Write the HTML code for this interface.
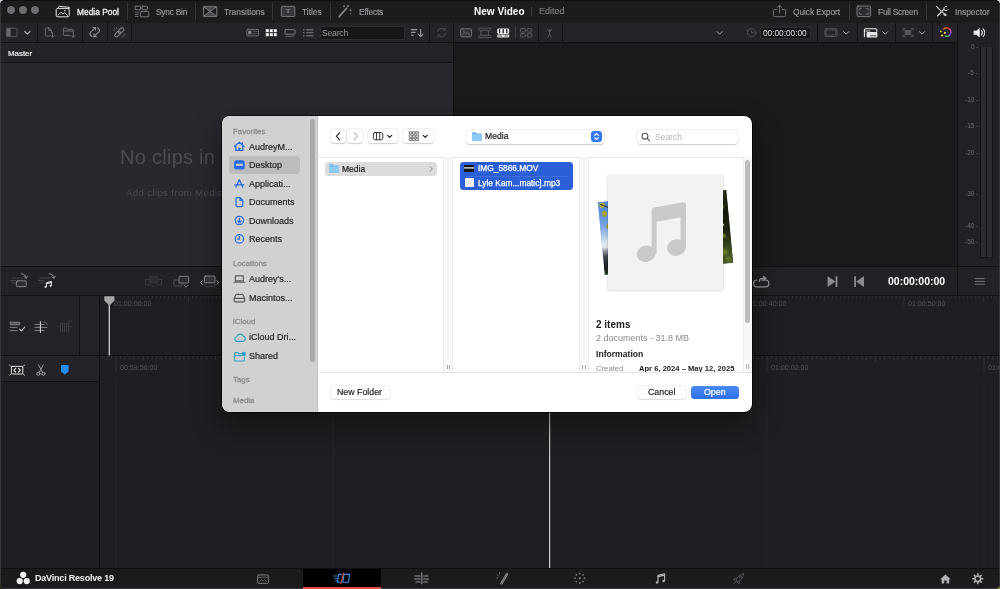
<!DOCTYPE html>
<html>
<head>
<meta charset="utf-8">
<title>DaVinci Resolve</title>
<style>
*{box-sizing:border-box;margin:0;padding:0}
html,body{width:1000px;height:589px;overflow:hidden;background:#23281a;font-family:"Liberation Sans",sans-serif;}
#app{position:absolute;left:0;top:0;width:1000px;height:589px;background:#1f1f23;border-radius:5px;overflow:hidden}
.t{will-change:transform}
.abs{position:absolute}
.t{position:absolute;white-space:nowrap;line-height:1}
/* top bar */
#topbar{left:0;top:0;width:1000px;height:23px;background:#1c1c1f}
.tl{border-radius:50%;background:#6c6c70;box-shadow:0 0 0 0.6px #0c0c0e}
.tb-label{top:7.5px;font-size:8.4px;color:#9c9ca0;-webkit-text-stroke:0.12px #9c9ca0}
.vsep{width:1px;background:#111114}
/* toolbar */
#toolbar{left:0;top:23px;width:957.3px;height:20px;background:#242428;border-bottom:1px solid #131316}
#master{left:0;top:43px;width:453px;height:20px;background:#242428;border-bottom:1px solid #131316}
#pool{left:0;top:63px;width:453px;height:203px;background:#28282e}
#viewer{left:454px;top:43px;width:503.3px;height:223px;background:#1a1a1b}
#meter{left:957.3px;top:23px;width:42.7px;height:244px;background:#212125;border-left:1px solid #131316}
#transport{left:0;top:267px;width:959px;height:28px;background:#222226}
#uptl{left:0;top:296px;width:1000px;height:59px;background:#1f1f23}
#lowtl{left:0;top:356px;width:1000px;height:212px;background:#1f1f23}
#bottombar{left:0;top:567.5px;width:1000px;height:22px;background:#1b1b1e;border-top:1px solid #0e0e10}
.hline{height:1px;background:#111114;left:0;width:1000px}
.ml{right:22px;font-size:6.4px;color:#6e6e73}
.rl{font-size:7.1px;color:#55555a}
/* dialog */
#dlg{left:222px;top:116px;width:530px;height:296px;background:#fff;border-radius:8px;overflow:hidden;box-shadow:0 0 0 0.8px rgba(0,0,0,.8),0 12px 30px rgba(0,0,0,.45)}
#side{left:0;top:0;width:95.5px;height:296px;background:#d1d1d1;border-right:1px solid #c2c2c2}
.sh{font-size:7.9px;color:#8c8c8c;left:11px;-webkit-text-stroke:0.3px #8c8c8c}
.si{font-size:9px;color:#222;left:27px;-webkit-text-stroke:0.18px #222}
.btn{border-radius:3.5px;background:#fff;box-shadow:0 0 0 0.5px rgba(0,0,0,.09),0 0.5px 1.2px rgba(0,0,0,.17)}
</style>
</head>
<body>
<div class="abs" style="left:0;top:0;width:8px;height:8px;background:#c9cdd8"></div>
<div class="abs" style="left:992px;top:0;width:8px;height:8px;background:#d5d7dc"></div>
<div class="abs" style="left:992px;top:581px;width:8px;height:8px;background:#7f8630"></div>
<div id="app">
  <div id="topbar" class="abs"></div>
  <div id="toolbar" class="abs"></div>
  <div id="master" class="abs"></div>
  <div id="pool" class="abs"></div>
  <div class="abs vsep" style="left:453px;top:23px;height:244px"></div>
  <div id="viewer" class="abs"></div>
  <div id="meter" class="abs"></div>
  <div class="abs hline" style="top:266px;width:1000px"></div>
  <div id="transport" class="abs"></div>
  <div class="abs hline" style="top:295px"></div>
  <div id="uptl" class="abs"></div>
  <div class="abs hline" style="top:355px"></div>
  <div id="lowtl" class="abs"></div>
  <div id="bottombar" class="abs"></div>

  <!-- ===== top bar content ===== -->
  <div class="abs tl" style="left:7px;top:5.5px;width:8.4px;height:8.4px"></div>
  <div class="abs tl" style="left:19px;top:5.5px;width:8.4px;height:8.4px"></div>
  <div class="abs tl" style="left:30.9px;top:5.5px;width:8.4px;height:8.4px"></div>
  <div class="t" style="left:77px;top:7.5px;font-size:8.4px;color:#f0f0f0;-webkit-text-stroke:0.3px #f0f0f0">Media Pool</div>
  <div class="t tb-label" style="left:155.5px;letter-spacing:-0.24px">Sync Bin</div>
  <div class="t tb-label" style="left:223.5px">Transitions</div>
  <div class="t tb-label" style="left:301.5px">Titles</div>
  <div class="t tb-label" style="left:359px;letter-spacing:-0.2px">Effects</div>
  <div class="t" style="left:474.4px;top:7.2px;font-size:10px;font-weight:bold;color:#fff;letter-spacing:0.02px">New Video</div>
  <div class="t tb-label" style="left:538.8px;top:7.4px;font-size:9px;color:#737377">Edited</div>
  <div class="t tb-label" style="left:793px;letter-spacing:-0.08px">Quick Export</div>
  <div class="t tb-label" style="left:877.5px;letter-spacing:-0.23px">Full Screen</div>
  <div class="t tb-label" style="left:955px">Inspector</div>
  <div class="abs vsep" style="left:126.5px;top:3px;height:17px;background:#34343a"></div>
  <div class="abs vsep" style="left:194.5px;top:3px;height:17px;background:#34343a"></div>
  <div class="abs vsep" style="left:272px;top:3px;height:17px;background:#34343a"></div>
  <div class="abs vsep" style="left:329.5px;top:3px;height:17px;background:#34343a"></div>
  <div class="abs vsep" style="left:531.4px;top:7px;height:8.5px;background:#3e3e44"></div>
  <div class="abs vsep" style="left:849px;top:3px;height:17px;background:#34343a"></div>
  <div class="abs vsep" style="left:925.5px;top:3px;height:17px;background:#34343a"></div>
  <svg class="abs" style="left:0;top:0" width="1000" height="23" viewBox="0 0 1000 23" fill="none" stroke-linecap="round" stroke-linejoin="round">
    <!-- media pool icon -->
    <g stroke="#e4e4e4" stroke-width="1">
      <path d="M58.4 7.6 L59.2 6.2 L69.4 7.4 L69 9"/>
      <rect x="56.2" y="8.4" width="13" height="8.4" rx="1.2"/>
      <path d="M58 15.2 L61 12.2 L63 14 L64.6 12.8 L67.4 15.2" stroke-width="0.9"/>
      <circle cx="64.8" cy="10.8" r="0.8" fill="#e4e4e4" stroke="none"/>
    </g>
    <!-- sync bin icon -->
    <g stroke="#7d7d82" stroke-width="1">
      <rect x="135.2" y="6.2" width="5.4" height="3.6" rx="0.6"/>
      <rect x="142" y="6.2" width="5.4" height="3.6" rx="0.6"/>
      <rect x="140.4" y="11.6" width="8.4" height="5.2" rx="0.8"/>
      <path d="M135.4 12.4 H138.2 M135.4 14.4 H138.2 M135.4 16.4 H138.2" stroke-width="0.8"/>
    </g>
    <!-- transitions icon -->
    <g stroke="#7d7d82" stroke-width="1">
      <rect x="203.4" y="6.4" width="13.4" height="10" rx="0.8"/>
      <path d="M203.8 6.8 L210.1 11.4 L216.4 6.8 M203.8 16 L210.1 11.4 L216.4 16" fill="#4a4a4f"/>
    </g>
    <!-- titles icon -->
    <g stroke="#7d7d82" stroke-width="1">
      <rect x="281.4" y="6.4" width="13.4" height="10" rx="0.8" fill="#37373b"/>
    </g>
    <!-- effects icon -->
    <g stroke="#8a8a8f" stroke-width="1.3">
      <path d="M339.2 16.6 L346.6 8.2" stroke-width="1.7"/>
      <path d="M348 5.2 V7 M347.1 6.1 H348.9 M350.6 9.6 V11 M349.9 10.3 H351.3 M344 5.6 V6.8 M343.4 6.2 H344.6 M350.8 13.4 V14.2" stroke-width="0.8"/>
    </g>
    <!-- quick export -->
    <g stroke="#6c6c71" stroke-width="1">
      <path d="M777 9.4 H774.4 a1 1 0 0 0 -1 1 V15.6 a1 1 0 0 0 1 1 H784.6 a1 1 0 0 0 1 -1 V10.4 a1 1 0 0 0 -1 -1 H782"/>
      <path d="M779.5 13 V5.4 M777.2 7.4 L779.5 5.2 L781.8 7.4"/>
    </g>
    <!-- full screen -->
    <g stroke="#7d7d82" stroke-width="1">
      <rect x="857" y="6" width="13.6" height="10.6" rx="1.2" fill="#2c2c30"/>
      <path d="M859.4 10 V8.4 H861.4 M866.2 8.4 H868.2 V10 M868.2 12.6 V14.2 H866.2 M861.4 14.2 H859.4 V12.6" stroke-width="0.8"/>
    </g>
    <!-- inspector -->
    <g stroke="#d2d2d2" stroke-width="1.1">
      <path d="M936.6 6.6 L944.4 14.2"/>
      <path d="M937.6 15.8 L943.8 9.4" stroke-width="1.3"/>
      <path d="M946.6 6.4 a2.2 2.2 0 1 0 1.4 3.2" stroke-width="1"/>
      <ellipse cx="945" cy="14.7" rx="1.7" ry="1.2" fill="#d2d2d2" stroke="none" transform="rotate(20 945 14.7)"/>
    </g>
  </svg>
  <div class="t" style="left:286.4px;top:8.2px;font-size:6.5px;font-family:'Liberation Serif',serif;font-weight:bold;color:#8a8a8f">T</div>
  <!-- ===== toolbar row ===== -->
  <div class="abs vsep" style="left:36.5px;top:23px;height:19px"></div>
  <div class="abs vsep" style="left:82px;top:23px;height:19px"></div>
  <div class="abs vsep" style="left:106.8px;top:23px;height:19px"></div>
  <div class="abs vsep" style="left:131px;top:23px;height:19px"></div>
  <div class="abs vsep" style="left:428.5px;top:23px;height:19px"></div>
  <div class="abs vsep" style="left:514.6px;top:26px;height:13px;background:#3a3a40"></div>
  <div class="abs vsep" style="left:537.8px;top:23px;height:19px"></div>
  <div class="abs vsep" style="left:562px;top:23px;height:19px"></div>
  <div class="abs vsep" style="left:816.5px;top:23px;height:19px"></div>
  <div class="abs vsep" style="left:857px;top:23px;height:19px"></div>
  <div class="abs vsep" style="left:894.7px;top:23px;height:19px"></div>
  <div class="abs vsep" style="left:931.5px;top:23px;height:19px"></div>
  <div class="abs" style="left:320px;top:26px;width:85px;height:13.5px;border-radius:2px;background:#161618;border:1px solid #2c2c31"></div>
  <div class="t" style="left:322px;top:28.6px;font-size:8.6px;color:#9c9ca0;letter-spacing:-0.2px">Search</div>
  <div class="abs" style="left:760px;top:26.5px;width:50.5px;height:12.5px;border-radius:2px;background:#151517;border:1px solid #2e2e33"></div>
  <div class="t" style="left:763px;top:28.9px;font-size:8.4px;color:#dedede;letter-spacing:-0.05px">00:00:00:00</div>
  <div class="t" style="left:7.7px;top:49.6px;font-size:7.9px;color:#ececec;-webkit-text-stroke:0.2px #ececec">Master</div>
  <svg class="abs" style="left:0;top:23px" width="1000" height="20" viewBox="0 23 1000 20" fill="none" stroke-linecap="round" stroke-linejoin="round">
    <!-- sidebar toggle -->
    <rect x="6.6" y="28.2" width="10.4" height="8.4" rx="1" stroke="#5e5e63" stroke-width="0.9"/>
    <rect x="6.8" y="28.4" width="3.8" height="8" fill="#6a6a6f"/>
    <path d="M24.6 31.4 L27.3 34.2 L30 31.4" stroke="#b4b4b8" stroke-width="1.1"/>
    <!-- import file -->
    <g stroke="#6e6e73" stroke-width="1">
      <path d="M51.4 33 V30.2 L49 27.8 H46.2 a0.8 0.8 0 0 0 -0.8 0.8 V35.2 a0.8 0.8 0 0 0 0.8 0.8 H49.4 M48.8 28 V30.4 H51.2"/>
      <path d="M52.6 32.6 V37 M50.8 35.4 L52.6 37.2 L54.4 35.4"/>
    </g>
    <!-- import folder -->
    <g stroke="#6e6e73" stroke-width="1">
      <path d="M70 35.4 H64.2 a0.8 0.8 0 0 1 -0.8 -0.8 V28.8 a0.8 0.8 0 0 1 0.8 -0.8 H66.6 L67.8 29.4 H72.4 a0.8 0.8 0 0 1 0.8 0.8 V32.4 M63.6 31 H73"/>
      <path d="M73.2 33 V37.2 M71.4 35.6 L73.2 37.4 L75 35.6"/>
    </g>
    <!-- sync -->
    <g stroke="#8c8c91" stroke-width="1.1" transform="rotate(-42 94.7 32.1)">
      <path d="M89.6 33.4 V31.8 a2.4 2.4 0 0 1 2.4 -2.4 H98"/>
      <path d="M96.4 27.6 L98.4 29.4 L96.4 31.2" />
      <path d="M99.8 30.8 V32.4 a2.4 2.4 0 0 1 -2.4 2.4 H91.4"/>
      <path d="M93 33 L91 34.8 L93 36.6"/>
    </g>
    <!-- link -->
    <g stroke="#808085" stroke-width="1.05" transform="rotate(-45 119.3 32.3)">
      <rect x="113.6" y="30.5" width="6.6" height="3.6" rx="1.8"/>
      <rect x="118.4" y="30.5" width="6.6" height="3.6" rx="1.8"/>
    </g>
    <g stroke="#68686d" stroke-width="0.7">
      <path d="M114.4 28.2 L115.2 29.4 M113.2 30 L114.4 30.6 M116.4 27.4 L116.6 28.6"/>
      <path d="M124.2 36.4 L123.4 35.2 M125.4 34.6 L124.2 34 M122.2 37.2 L122 36"/>
    </g>
    <!-- view mode icons -->
    <g stroke="#75757a" stroke-width="0.9">
      <rect x="246.8" y="29.4" width="11.8" height="6.4" rx="0.8"/>
      <rect x="248.2" y="30.8" width="3.2" height="3.4" fill="#8a8a8f" stroke="none"/>
      <path d="M253 31.4 H257 M253 33.4 H257" stroke-width="0.6"/>
    </g>
    <g fill="#f4f4f4">
      <rect x="265.8" y="29.2" width="3" height="3"/><rect x="269.8" y="29.2" width="3" height="3"/><rect x="273.8" y="29.2" width="3" height="3"/>
      <rect x="265.8" y="33.2" width="3" height="3"/><rect x="269.8" y="33.2" width="3" height="3"/><rect x="273.8" y="33.2" width="3" height="3"/>
    </g>
    <g stroke="#7c7c81" stroke-width="1">
      <rect x="285" y="29.6" width="10" height="4.6" rx="0.6"/>
      <path d="M286.4 36.2 H293.6" stroke-width="0.8"/>
    </g>
    <g stroke="#85858a" stroke-width="1">
      <path d="M306.6 29.8 H313 M306.6 32.8 H313 M306.6 35.8 H313"/>
      <path d="M303.4 29.8 H304.2 M303.4 32.8 H304.2 M303.4 35.8 H304.2"/>
    </g>
    <!-- sort -->
    <g stroke="#9a9a9f" stroke-width="1.1">
      <path d="M411.4 29.6 H416.8 M411.4 32.4 H415 M411.4 35.2 H413.4"/>
      <path d="M420.6 29.2 V36.4 M418.2 34.2 L420.6 36.6 L423 34.2"/>
    </g>
    <!-- refresh dim -->
    <g stroke="#4e4e53" stroke-width="1">
      <path d="M437.6 31.6 a4.2 4.2 0 0 1 7.4 -1.6 M445.2 28.2 V30.2 H443.2"/>
      <path d="M445.6 33.6 a4.2 4.2 0 0 1 -7.4 1.6 M438 37 V35 H440"/>
    </g>
    <!-- viewer mode icons -->
    <g stroke="#6f6f74" stroke-width="1">
      <rect x="460.6" y="28.8" width="11" height="8" rx="1.2" fill="#333337"/>
      <path d="M462.4 35 L464.6 32.4 L466 33.8 L467.4 32.6 L469.6 35" stroke-width="0.8"/>
      <circle cx="464" cy="31" r="0.7" fill="#6f6f74" stroke="none"/>
    </g>
    <g stroke="#66666b" stroke-width="0.8">
      <path d="M478.4 28.2 H491 M478.4 37.6 H491" stroke-dasharray="1 1"/>
      <rect x="481" y="30.4" width="7.4" height="5" rx="0.6"/>
      <path d="M478.6 29.8 L480.8 31 M478.6 36.2 L480.8 35 M490.8 29.8 L488.6 31 M490.8 36.2 L488.6 35"/>
    </g>
    <g>
      <rect x="497.2" y="28.4" width="12" height="5.6" rx="1.4" fill="#f0f0f0"/>
      <rect x="497.2" y="34.6" width="12" height="2.8" rx="1" fill="#e0e0e0"/>
      <path d="M499.6 29.6 V32.8 M503.2 29.6 V32.8 M506.8 29.6 V32.8" stroke="#1c1c1f" stroke-width="1.3"/>
      <path d="M499 36 H501.4 M505 36 H507.4" stroke="#1c1c1f" stroke-width="0.7"/>
    </g>
    <g stroke="#5c5c61" stroke-width="1">
      <rect x="520.6" y="28.6" width="4.8" height="3.4" rx="0.8"/><rect x="527" y="28.6" width="4.8" height="3.4" rx="0.8"/>
      <rect x="520.6" y="33.6" width="4.8" height="3.4" rx="0.8"/><rect x="527" y="33.6" width="4.8" height="3.4" rx="0.8"/>
    </g>
    <g stroke="#5c5c61" stroke-width="0.9">
      <circle cx="549.6" cy="30.8" r="1" fill="#5c5c61"/>
      <path d="M549.6 32.2 V34.4 M549.6 34.4 L547.8 37.2 M549.6 34.4 L551.4 37.2 M547.4 29.2 L548.4 30.2 M551.8 29.2 L550.8 30.2"/>
    </g>
    <!-- chevron in viewer title -->
    <path d="M717 31.6 L719.6 34.2 L722.2 31.6" stroke="#a0a0a5" stroke-width="1"/>
    <!-- clock -->
    <g stroke="#505055" stroke-width="0.9">
      <circle cx="751.6" cy="32.6" r="4.2"/>
      <path d="M751.6 30.2 V32.8 H754 M746.4 30 L748.2 31.2" />
    </g>
    <!-- bounding -->
    <g stroke="#59595e" stroke-width="1">
      <rect x="825" y="28.8" width="12" height="7.6" rx="1"/>
      <path d="M826.4 30.4 Q831 29.4 835.6 30.4 V34.8 Q831 35.8 826.4 34.8 Z" stroke-width="0.7"/>
    </g>
    <path d="M843.6 31.6 L846.2 34.2 L848.8 31.6" stroke="#a0a0a5" stroke-width="1"/>
    <!-- timeline res icon (white) -->
    <g>
      <path d="M864.4 36.6 V29.8 a1 1 0 0 1 1 -1 H875.8 a1 1 0 0 1 1 1 V31.4" stroke="#e8e8e8" stroke-width="1.1"/>
      <rect x="866.6" y="32" width="10.8" height="5.4" rx="1" fill="#e8e8e8"/>
      <path d="M864.6 31 H870" stroke="#e8e8e8" stroke-width="0.8"/>
      <path d="M870.6 35.8 H873 M874 35.8 H875.8" stroke="#1c1c1f" stroke-width="0.8"/>
    </g>
    <path d="M882.6 31.6 L885.2 34.2 L887.8 31.6" stroke="#a0a0a5" stroke-width="1"/>
    <!-- dim scope icon -->
    <g stroke="#58585d" stroke-width="0.9">
      <path d="M903 30.4 V28.6 H905 M911.2 28.6 H913.2 V30.4 M913.2 34.8 V36.6 H911.2 M905 36.6 H903 V34.8"/>
      <rect x="905.6" y="30.6" width="5" height="4" fill="#58585d"/>
      <path d="M904 29.6 L905.6 30.8 M912.2 29.6 L910.6 30.8 M904 35.6 L905.6 34.4 M912.2 35.6 L910.6 34.4"/>
    </g>
    <path d="M919.4 31.6 L922 34.2 L924.6 31.6" stroke="#a0a0a5" stroke-width="1"/>
    <!-- color wheel icon -->
    <g stroke-width="1.2" fill="none">
      <path d="M943.6 29.2 A4.2 4.2 0 0 1 946.8 27.9" stroke="#e8792e"/>
      <path d="M946.8 27.9 A4.2 4.2 0 0 1 950 29.4" stroke="#e8453c"/>
      <path d="M950 29.4 A4.2 4.2 0 0 1 950.9 33" stroke="#e545c8"/>
      <path d="M950.9 33 A4.2 4.2 0 0 1 948.6 35.9" stroke="#7a4fe8"/>
      <path d="M948.6 35.9 A4.2 4.2 0 0 1 945.4 36.1" stroke="#35c46a"/>
      <circle cx="940.8" cy="31.3" r="0.9" fill="#f3e23e" stroke="none"/>
      <circle cx="944.9" cy="32.8" r="1.1" fill="#f3e23e" stroke="none"/>
      <circle cx="942.2" cy="35.5" r="1.1" fill="#f3e23e" stroke="none"/>
    </g>
    <!-- speaker -->
    <g fill="#f0f0f0" stroke="#f0f0f0">
      <path d="M974.2 31 H976.4 L979.4 28.4 V37 L976.4 34.4 H974.2 Z" stroke-width="0.6"/>
      <path d="M981.4 30.6 a3 3 0 0 1 0 4.2 M983.2 29 a5.4 5.4 0 0 1 0 7.4" fill="none" stroke-width="1.1"/>
    </g>
  </svg>
  <!-- ===== media pool empty text ===== -->
  <div class="t" style="left:119.9px;top:146.6px;font-size:20px;color:#4b4d54;letter-spacing:0.27px">No clips in media pool</div>
  <div class="t" style="left:126.3px;top:188.2px;font-size:9.7px;color:#494b51;letter-spacing:0.33px">Add clips from Media Storage to get started</div>

  <!-- ===== audio meter ===== -->
  <div class="abs" style="left:980px;top:46.6px;width:13px;height:211.2px;background:#151517"></div>
  <div class="abs" style="left:980.8px;top:47.4px;width:5.4px;height:209.6px;background:#2b2b30"></div>
  <div class="abs" style="left:986.9px;top:47.4px;width:5.4px;height:209.6px;background:#2b2b30"></div>
  <div class="t ml" style="top:44px">0 -</div>
  <div class="t ml" style="top:70.4px">-5 -</div>
  <div class="t ml" style="top:96.9px">-10 -</div>
  <div class="t ml" style="top:123px">-15 -</div>
  <div class="t ml" style="top:149.5px">-20 -</div>
  <div class="t ml" style="top:191px">-30 -</div>
  <div class="t ml" style="top:223px">-40 -</div>
  <div class="t ml" style="top:238.6px">-50 -</div>

  <!-- ===== transport ===== -->
  <div class="abs" style="left:957.3px;top:267px;width:42.7px;height:28px;background:#222226;border-left:1px solid #131316"></div>
  <div class="t" style="left:888px;top:276.2px;font-size:10.5px;font-weight:bold;color:#fff">00:00:00:00</div>
  <svg class="abs" style="left:0;top:267px" width="1000" height="29" viewBox="0 267 1000 29" fill="none" stroke-linecap="round" stroke-linejoin="round">
    <g stroke="#4a4a4f" stroke-width="0.9">
      <path d="M12 278 H23 M10.6 280.5 H15.6 M12 283 H15.4"/>
      <rect x="16.4" y="280.9" width="9.8" height="5.8" rx="1" stroke="#8a8a8f" stroke-width="1" fill="#2a2a2e"/>
      <path d="M21.4 273.8 Q25.4 273.8 26 277.6 M24.2 276.6 L26.1 278.6 L27.4 276.2" stroke="#8a8a8f" stroke-width="1"/>
    </g>
    <g stroke="#4a4a4f" stroke-width="0.9">
      <path d="M39.8 278 H50.8 M38.4 280.5 H44.4 M39.8 283 H43.4"/>
      <path d="M49.2 273.8 Q53.2 273.8 53.8 277.6 M52 276.6 L53.9 278.6 L55.2 276.2" stroke="#8a8a8f" stroke-width="1"/>
      <path d="M46.4 286.6 V282.6 L51.4 281.4 V285.6" stroke="#e0e0e0" stroke-width="1"/>
      <path d="M46.4 283.6 L51.4 282.4" stroke="#e0e0e0" stroke-width="1.2"/>
      <circle cx="45.6" cy="286.8" r="1.1" fill="#e0e0e0" stroke="none"/><circle cx="50.6" cy="285.8" r="1.1" fill="#e0e0e0" stroke="none"/>
    </g>
    <g stroke="#3e3e43" stroke-width="0.9">
      <rect x="145.6" y="279.4" width="4.6" height="5.6" rx="0.6"/><rect x="157" y="279.4" width="4.6" height="5.6" rx="0.6"/>
      <rect x="149.8" y="276.4" width="7.6" height="6" rx="0.8" fill="#2b2b30"/>
      <path d="M151.8 285.4 L153.6 287.2 L155.4 285.4"/>
    </g>
    <g stroke="#5a5a5f" stroke-width="0.9">
      <rect x="173.8" y="280" width="8" height="6" rx="0.8"/>
      <rect x="179" y="276.4" width="9.6" height="6.6" rx="0.8" stroke="#85858a" fill="#2b2b30"/>
      <path d="M184.4 285.4 L186.2 287.2 L188 285.4" stroke="#85858a"/>
    </g>
    <g stroke="#77777c" stroke-width="0.9">
      <rect x="204.2" y="282.4" width="11" height="4.2" rx="0.8" stroke="#4c4c51"/>
      <rect x="204.4" y="276" width="10.6" height="6.8" rx="1" fill="#3a3a3e" stroke="#8a8a8f" stroke-width="1"/>
      <path d="M202.4 280.6 L200.4 282.5 L202.4 284.4 M216.8 280.6 L218.8 282.5 L216.8 284.4" stroke="#a0a0a5" stroke-width="1"/>
    </g>
    <!-- loop -->
    <g stroke="#9a9a9f" stroke-width="1.2">
      <path d="M757 280 a3.4 3.4 0 0 0 0 6.8 H765.4 a3.4 3.4 0 0 0 0 -6.8 H761.4"/>
      <path d="M763.4 276.4 L766 278.4 L763.4 280.4 M766 278.4 H762.4 a3 3 0 0 0 -3 3"/>
    </g>
    <!-- next / prev -->
    <g fill="#8c8c90" stroke="none">
      <path d="M827.6 276.2 L835.4 281.6 L827.6 287 Z"/><rect x="835.6" y="276.2" width="1.8" height="10.8"/>
      <path d="M864 276.2 L856.2 281.6 L864 287 Z"/><rect x="854.2" y="276.2" width="1.8" height="10.8"/>
    </g>
    <path d="M975.4 278.6 H984.4 M975.4 281.4 H984.4 M975.4 284.2 H984.4" stroke="#7e7e83" stroke-width="0.9"/>
  </svg>

  <!-- ===== upper timeline ===== -->
  <div class="abs" style="left:0;top:296px;width:79px;height:59px;background:#232327"></div>
  <div class="abs vsep" style="left:79px;top:296px;height:59px"></div>
  <div class="abs" style="left:80px;top:296px;width:19px;height:59px;background:#232327"></div>
  <div class="abs vsep" style="left:99px;top:296px;height:272px"></div>
  <div class="t rl" style="left:113.5px;top:300.6px">01:00:00:00</div>
  <div class="t rl" style="left:272.5px;top:300.6px">01:00:10:00</div>
  <div class="t rl" style="left:749.3px;top:300.6px">01:00:40:00</div>
  <div class="t rl" style="left:908px;top:300.6px">01:00:50:00</div>
  <svg class="abs" style="left:0;top:296px" width="1000" height="62" viewBox="0 296 1000 62" fill="none">
    <path d="M101.0 296 v2.6 M105.0 296 v2.6 M109.0 296 v10 M113.0 296 v2.6 M117.0 296 v2.6 M120.9 296 v2.6 M124.9 296 v2.6 M128.9 296 v2.6 M132.8 296 v2.6 M136.8 296 v2.6 M140.8 296 v2.6 M144.8 296 v2.6 M148.8 296 v2.6 M152.7 296 v2.6 M156.7 296 v2.6 M160.7 296 v2.6 M164.7 296 v2.6 M168.6 296 v2.6 M172.6 296 v2.6 M176.6 296 v2.6 M180.6 296 v2.6 M184.5 296 v2.6 M188.5 296 v5 M192.5 296 v2.6 M196.4 296 v2.6 M200.4 296 v2.6 M204.4 296 v2.6 M208.4 296 v2.6 M212.4 296 v2.6 M216.3 296 v2.6 M220.3 296 v2.6 M224.3 296 v2.6 M228.2 296 v2.6 M232.2 296 v2.6 M236.2 296 v2.6 M240.2 296 v2.6 M244.2 296 v2.6 M248.1 296 v2.6 M252.1 296 v2.6 M256.1 296 v2.6 M260.1 296 v2.6 M264.0 296 v2.6 M268.0 296 v10 M272.0 296 v2.6 M276.0 296 v2.6 M279.9 296 v2.6 M283.9 296 v2.6 M287.9 296 v2.6 M291.9 296 v2.6 M295.8 296 v2.6 M299.8 296 v2.6 M303.8 296 v2.6 M307.8 296 v2.6 M311.7 296 v2.6 M315.7 296 v2.6 M319.7 296 v2.6 M323.6 296 v2.6 M327.6 296 v2.6 M331.6 296 v2.6 M335.6 296 v2.6 M339.6 296 v2.6 M343.5 296 v2.6 M347.5 296 v5 M351.5 296 v2.6 M355.5 296 v2.6 M359.4 296 v2.6 M363.4 296 v2.6 M367.4 296 v2.6 M371.4 296 v2.6 M375.3 296 v2.6 M379.3 296 v2.6 M383.3 296 v2.6 M387.2 296 v2.6 M391.2 296 v2.6 M395.2 296 v2.6 M399.2 296 v2.6 M403.2 296 v2.6 M407.1 296 v2.6 M411.1 296 v2.6 M415.1 296 v2.6 M419.1 296 v2.6 M423.0 296 v2.6 M427.0 296 v10 M431.0 296 v2.6 M434.9 296 v2.6 M438.9 296 v2.6 M442.9 296 v2.6 M446.9 296 v2.6 M450.9 296 v2.6 M454.8 296 v2.6 M458.8 296 v2.6 M462.8 296 v2.6 M466.8 296 v2.6 M470.7 296 v2.6 M474.7 296 v2.6 M478.7 296 v2.6 M482.7 296 v2.6 M486.6 296 v2.6 M490.6 296 v2.6 M494.6 296 v2.6 M498.6 296 v2.6 M502.5 296 v2.6 M506.5 296 v5 M510.5 296 v2.6 M514.5 296 v2.6 M518.4 296 v2.6 M522.4 296 v2.6 M526.4 296 v2.6 M530.4 296 v2.6 M534.3 296 v2.6 M538.3 296 v2.6 M542.3 296 v2.6 M546.2 296 v2.6 M550.2 296 v2.6 M554.2 296 v2.6 M558.2 296 v2.6 M562.2 296 v2.6 M566.1 296 v2.6 M570.1 296 v2.6 M574.1 296 v2.6 M578.0 296 v2.6 M582.0 296 v2.6 M586.0 296 v10 M590.0 296 v2.6 M594.0 296 v2.6 M597.9 296 v2.6 M601.9 296 v2.6 M605.9 296 v2.6 M609.9 296 v2.6 M613.8 296 v2.6 M617.8 296 v2.6 M621.8 296 v2.6 M625.8 296 v2.6 M629.7 296 v2.6 M633.7 296 v2.6 M637.7 296 v2.6 M641.6 296 v2.6 M645.6 296 v2.6 M649.6 296 v2.6 M653.6 296 v2.6 M657.6 296 v2.6 M661.5 296 v2.6 M665.5 296 v5 M669.5 296 v2.6 M673.5 296 v2.6 M677.4 296 v2.6 M681.4 296 v2.6 M685.4 296 v2.6 M689.4 296 v2.6 M693.3 296 v2.6 M697.3 296 v2.6 M701.3 296 v2.6 M705.2 296 v2.6 M709.2 296 v2.6 M713.2 296 v2.6 M717.2 296 v2.6 M721.1 296 v2.6 M725.1 296 v2.6 M729.1 296 v2.6 M733.1 296 v2.6 M737.1 296 v2.6 M741.0 296 v2.6 M745.0 296 v10 M749.0 296 v2.6 M753.0 296 v2.6 M756.9 296 v2.6 M760.9 296 v2.6 M764.9 296 v2.6 M768.9 296 v2.6 M772.8 296 v2.6 M776.8 296 v2.6 M780.8 296 v2.6 M784.8 296 v2.6 M788.7 296 v2.6 M792.7 296 v2.6 M796.7 296 v2.6 M800.6 296 v2.6 M804.6 296 v2.6 M808.6 296 v2.6 M812.6 296 v2.6 M816.6 296 v2.6 M820.5 296 v2.6 M824.5 296 v5 M828.5 296 v2.6 M832.5 296 v2.6 M836.4 296 v2.6 M840.4 296 v2.6 M844.4 296 v2.6 M848.4 296 v2.6 M852.3 296 v2.6 M856.3 296 v2.6 M860.3 296 v2.6 M864.2 296 v2.6 M868.2 296 v2.6 M872.2 296 v2.6 M876.2 296 v2.6 M880.1 296 v2.6 M884.1 296 v2.6 M888.1 296 v2.6 M892.1 296 v2.6 M896.1 296 v2.6 M900.0 296 v2.6 M904.0 296 v10 M908.0 296 v2.6 M912.0 296 v2.6 M915.9 296 v2.6 M919.9 296 v2.6 M923.9 296 v2.6 M927.9 296 v2.6 M931.8 296 v2.6 M935.8 296 v2.6 M939.8 296 v2.6 M943.8 296 v2.6 M947.7 296 v2.6 M951.7 296 v2.6 M955.7 296 v2.6 M959.6 296 v2.6 M963.6 296 v2.6 M967.6 296 v2.6 M971.6 296 v2.6 M975.6 296 v2.6 M979.5 296 v2.6 M983.5 296 v5 M987.5 296 v2.6 M991.5 296 v2.6 M995.4 296 v2.6 M999.4 296 v2.6" stroke="#38383d" stroke-width="0.7"/>
    <path d="M109.3 300 V355.4" stroke="#cfcfcf" stroke-width="1.3"/>
    <path d="M104.6 296.6 H114.2 V300.6 L109.4 305.2 L104.6 300.6 Z" fill="#a6a6a6" stroke="#b8b8b8" stroke-width="0.5"/>
    <!-- left icons -->
    <g stroke="#8a8a8f" stroke-width="0.9" stroke-linecap="round" stroke-linejoin="round">
      <rect x="10.2" y="322.2" width="9.6" height="2.6" rx="0.6" fill="#55555a"/>
      <path d="M10.2 327.4 H17 M10.2 330.6 H17"/>
      <path d="M19.6 329 L21.4 331 L24.8 327" stroke="#d0d0d0" stroke-width="1.1"/>
    </g>
    <g stroke="#8a8a8f" stroke-width="0.9" stroke-linecap="round">
      <path d="M35 324.4 H44 M35 327.4 H47 M35 330.4 H44" />
      <path d="M40.4 321.6 V332.4" stroke="#d0d0d0" stroke-width="1.1"/>
      <path d="M43.6 322 a4 4 0 0 1 4 3" stroke-width="0.7" stroke-dasharray="1 1"/>
    </g>
    <g stroke="#46464b" stroke-width="0.8" stroke-linecap="round">
      <path d="M57.6 326.6 H59.6 M70 326.6 H72 M60.6 323.4 V331.4 M62.6 322.6 V332 M64.6 323.4 V331.4 M66.6 322.6 V332 M68.6 323.4 V331.4"/>
      <path d="M68.8 320.8 L70.2 322.2 L71.6 320.8"/>
    </g>
  </svg>

  <!-- ===== lower timeline ===== -->
  <div class="abs" style="left:0;top:356px;width:99px;height:25px;background:#232327"></div>
  <div class="abs hline" style="top:381px;width:99px"></div>
  <div class="t rl" style="left:120.4px;top:364.8px">00:59:56:00</div>
  <div class="t rl" style="left:337.4px;top:364.8px">00:59:58:00</div>
  <div class="t rl" style="left:554.4px;top:364.8px">01:00:00:00</div>
  <div class="t rl" style="left:771.4px;top:364.8px">01:00:02:00</div>
  <div class="t rl" style="left:988.2px;top:364.8px">01:00:04:00</div>
  <svg class="abs" style="left:0;top:356px" width="1000" height="212" viewBox="0 356 1000 212" fill="none">
    <path d="M102.4 356 v3 M107.0 356 v4.2 M111.5 356 v3 M116.0 356 v16.5 M120.5 356 v3 M125.0 356 v4.2 M129.6 356 v3 M134.1 356 v4.2 M138.6 356 v3 M143.1 356 v4.2 M147.6 356 v3 M152.2 356 v4.2 M156.7 356 v3 M161.2 356 v4.2 M165.7 356 v3 M170.2 356 v4.2 M174.8 356 v3 M179.3 356 v4.2 M183.8 356 v3 M188.3 356 v4.2 M192.9 356 v3 M197.4 356 v4.2 M201.9 356 v3 M206.4 356 v4.2 M210.9 356 v3 M215.5 356 v4.2 M220.0 356 v3 M224.5 356 v6 M229.0 356 v3 M233.5 356 v4.2 M238.1 356 v3 M242.6 356 v4.2 M247.1 356 v3 M251.6 356 v4.2 M256.1 356 v3 M260.7 356 v4.2 M265.2 356 v3 M269.7 356 v4.2 M274.2 356 v3 M278.8 356 v4.2 M283.3 356 v3 M287.8 356 v4.2 M292.3 356 v3 M296.8 356 v4.2 M301.4 356 v3 M305.9 356 v4.2 M310.4 356 v3 M314.9 356 v4.2 M319.4 356 v3 M324.0 356 v4.2 M328.5 356 v3 M333.0 356 v16.5 M337.5 356 v3 M342.0 356 v4.2 M346.6 356 v3 M351.1 356 v4.2 M355.6 356 v3 M360.1 356 v4.2 M364.6 356 v3 M369.2 356 v4.2 M373.7 356 v3 M378.2 356 v4.2 M382.7 356 v3 M387.2 356 v4.2 M391.8 356 v3 M396.3 356 v4.2 M400.8 356 v3 M405.3 356 v4.2 M409.9 356 v3 M414.4 356 v4.2 M418.9 356 v3 M423.4 356 v4.2 M427.9 356 v3 M432.5 356 v4.2 M437.0 356 v3 M441.5 356 v6 M446.0 356 v3 M450.5 356 v4.2 M455.1 356 v3 M459.6 356 v4.2 M464.1 356 v3 M468.6 356 v4.2 M473.1 356 v3 M477.7 356 v4.2 M482.2 356 v3 M486.7 356 v4.2 M491.2 356 v3 M495.8 356 v4.2 M500.3 356 v3 M504.8 356 v4.2 M509.3 356 v3 M513.8 356 v4.2 M518.4 356 v3 M522.9 356 v4.2 M527.4 356 v3 M531.9 356 v4.2 M536.4 356 v3 M541.0 356 v4.2 M545.5 356 v3 M550.0 356 v16.5 M554.5 356 v3 M559.0 356 v4.2 M563.6 356 v3 M568.1 356 v4.2 M572.6 356 v3 M577.1 356 v4.2 M581.6 356 v3 M586.2 356 v4.2 M590.7 356 v3 M595.2 356 v4.2 M599.7 356 v3 M604.2 356 v4.2 M608.8 356 v3 M613.3 356 v4.2 M617.8 356 v3 M622.3 356 v4.2 M626.9 356 v3 M631.4 356 v4.2 M635.9 356 v3 M640.4 356 v4.2 M644.9 356 v3 M649.5 356 v4.2 M654.0 356 v3 M658.5 356 v6 M663.0 356 v3 M667.5 356 v4.2 M672.1 356 v3 M676.6 356 v4.2 M681.1 356 v3 M685.6 356 v4.2 M690.1 356 v3 M694.7 356 v4.2 M699.2 356 v3 M703.7 356 v4.2 M708.2 356 v3 M712.8 356 v4.2 M717.3 356 v3 M721.8 356 v4.2 M726.3 356 v3 M730.8 356 v4.2 M735.4 356 v3 M739.9 356 v4.2 M744.4 356 v3 M748.9 356 v4.2 M753.4 356 v3 M758.0 356 v4.2 M762.5 356 v3 M767.0 356 v16.5 M771.5 356 v3 M776.0 356 v4.2 M780.6 356 v3 M785.1 356 v4.2 M789.6 356 v3 M794.1 356 v4.2 M798.6 356 v3 M803.2 356 v4.2 M807.7 356 v3 M812.2 356 v4.2 M816.7 356 v3 M821.2 356 v4.2 M825.8 356 v3 M830.3 356 v4.2 M834.8 356 v3 M839.3 356 v4.2 M843.9 356 v3 M848.4 356 v4.2 M852.9 356 v3 M857.4 356 v4.2 M861.9 356 v3 M866.5 356 v4.2 M871.0 356 v3 M875.5 356 v6 M880.0 356 v3 M884.5 356 v4.2 M889.1 356 v3 M893.6 356 v4.2 M898.1 356 v3 M902.6 356 v4.2 M907.1 356 v3 M911.7 356 v4.2 M916.2 356 v3 M920.7 356 v4.2 M925.2 356 v3 M929.8 356 v4.2 M934.3 356 v3 M938.8 356 v4.2 M943.3 356 v3 M947.8 356 v4.2 M952.4 356 v3 M956.9 356 v4.2 M961.4 356 v3 M965.9 356 v4.2 M970.4 356 v3 M975.0 356 v4.2 M979.5 356 v3 M984.0 356 v16.5 M988.5 356 v3 M993.0 356 v4.2 M997.6 356 v3" stroke="#3a3a3f" stroke-width="0.7"/>
    <path d="M116 381 V568 M333 381 V568 M767 381 V568 M984 381 V568" stroke="#26262a" stroke-width="1"/>
    <path d="M549.6 356 V568" stroke="#c9c9c9" stroke-width="1.2"/>
    <!-- icons -->
    <g stroke="#e0e0e0" stroke-width="1" stroke-linecap="round" stroke-linejoin="round">
      <rect x="11.4" y="366.4" width="11.4" height="7.6" rx="0.8"/>
      <path d="M9.4 365 L11.2 366.6 M24.8 365 L23 366.6 M9.4 375.4 L11.2 373.8 M24.8 375.4 L23 373.8" stroke-width="0.8"/>
      <path d="M15.6 368.4 L13.8 370.2 L15.6 372 M18.6 368.4 L20.4 370.2 L18.6 372" stroke-width="1.2"/>
    </g>
    <g stroke="#a6a6ab" stroke-width="0.9" stroke-linecap="round">
      <path d="M38.6 365 L42.6 372.4 M43.2 365 L39.2 372.4"/>
      <circle cx="38.4" cy="373.8" r="1.6"/><circle cx="43.4" cy="373.8" r="1.6"/>
    </g>
    <path d="M61 366 a1 1 0 0 1 1 -1 H67.6 a1 1 0 0 1 1 1 V371.6 L64.8 374.6 L61 371.6 Z" fill="#1f8ef6"/>
  </svg>

  <!-- ===== bottom bar ===== -->
  <div class="abs" style="left:302.5px;top:568.5px;width:78.5px;height:19px;background:#000"></div>
  
  <div class="t" style="left:34.6px;top:574.4px;font-size:9px;font-weight:bold;color:#f2f2f2;letter-spacing:-0.2px">DaVinci Resolve 19</div>
  <svg class="abs" style="left:0;top:568px" width="1000" height="21" viewBox="0 568 1000 21" fill="none" stroke-linecap="round" stroke-linejoin="round">
    <g fill="#f4f4f4" stroke="none">
      <circle cx="23.2" cy="574.8" r="3.1"/><circle cx="19.7" cy="581.1" r="3.1"/><circle cx="26.7" cy="581.1" r="3.1"/>
    </g>
    <!-- media -->
    <g stroke="#7c7c80" stroke-width="1">
      <rect x="257.6" y="575" width="11" height="8.4" rx="1.2"/>
      <path d="M257.8 577.2 H268.4" stroke-width="0.7"/>
      <path d="M259.6 581.6 L261.6 579.6 L263 581 L264.6 579.8 L266.6 581.6" stroke-width="0.7"/>
    </g>
    <!-- cut -->
    <g stroke-width="1.1">
      <path d="M333.4 576 H337 M334.4 578.4 H337 M335.4 580.8 H337" stroke="#3b8fe6" stroke-width="0.8"/>
      <path d="M341.6 574.4 H338.6 L337.4 582.2 H340.4" stroke="#3b8fe6"/>
      <path d="M344 574.4 H349.6 L348.4 582.2 H342.8 Z" stroke="#3b8fe6"/>
      <path d="M343.6 573 L340.8 583.6" stroke="#e5493b" stroke-width="1.1"/>
    </g>
    <!-- edit -->
    <g stroke="#9a9a9f" stroke-width="1">
      <path d="M421.8 572.8 V584"/>
      <path d="M415 576 H420 M423.6 576 H428 M414.6 579 H420 M423.6 579 H428.6 M416 582 H420 M423.6 582 H427.4" stroke-width="1.2"/>
    </g>
    <!-- fusion -->
    <g stroke="#8a8a8f" stroke-width="1">
      <path d="M500.6 583.2 L506.6 573.2 L508 574 L502 584 Z" fill="#6a6a6f"/>
      <path d="M497 574.6 L498.6 576.2 M499.6 572.6 V574 M496.6 578 H498" stroke-width="0.7"/>
    </g>
    <!-- color -->
    <g fill="#77777c" stroke="none">
      <circle cx="579.8" cy="573.4" r="0.9"/><circle cx="583.2" cy="574.8" r="0.9"/><circle cx="584.6" cy="578.2" r="0.9"/><circle cx="583.2" cy="581.6" r="0.9"/>
      <circle cx="579.8" cy="583" r="0.9"/><circle cx="576.4" cy="581.6" r="0.9"/><circle cx="575" cy="578.2" r="0.9"/><circle cx="576.4" cy="574.8" r="0.9"/>
      <circle cx="579.8" cy="578.2" r="1.1"/>
    </g>
    <!-- fairlight -->
    <g stroke="#b4b4b8" stroke-width="1.1">
      <path d="M658 582.2 V575.4 L664.6 573.8 V580.8"/>
      <circle cx="657" cy="582.4" r="1.2" fill="#b4b4b8" stroke="none"/><circle cx="663.6" cy="581" r="1.2" fill="#b4b4b8" stroke="none"/>
      <path d="M658 576.6 L664.6 575" stroke-width="1.4"/>
    </g>
    <!-- deliver -->
    <g stroke="#57575c" stroke-width="0.9">
      <path d="M736.4 580.6 Q736.8 575.6 743.6 573.4 Q742.6 580 737.6 581.8 Z"/>
      <path d="M736.6 578.2 L733.4 579.2 L735.6 581 M739.6 581.2 L739 584 L737 582.2 M734 583.6 L735.6 582"/>
      <circle cx="740.2" cy="577" r="0.9"/>
    </g>
    <!-- home -->
    <path d="M940 578.6 L945.2 574 L950.4 578.6 H949 V583 H946.4 V580 H944 V583 H941.4 V578.6 Z" fill="#b2b2b6" stroke="none" transform="translate(0.2 0.6)"/>
    <!-- settings -->
    <g stroke="#b2b2b6" transform="translate(-0.2 0.4)">
      <circle cx="978" cy="578.4" r="2.8" stroke-width="1.6"/>
      <path d="M978 573.4 V574.6 M978 582.2 V583.4 M973 578.4 H974.2 M981.8 578.4 H983 M974.5 574.9 L975.3 575.7 M980.7 581.1 L981.5 581.9 M974.5 581.9 L975.3 581.1 M980.7 575.7 L981.5 574.9" stroke-width="1.5"/>
    </g>
  </svg>
  <div class="abs" style="left:0;top:0;width:1000px;height:589px;border-radius:5px;border:1px solid #37373b;border-top-color:#0f0f11;pointer-events:none"></div>
  <div class="abs" style="left:302.5px;top:587px;width:78.5px;height:2px;background:#e5493b"></div>
  <div id="dlg" class="abs">
    <div id="side" class="abs">
      <div class="abs" style="left:88px;top:3px;width:5px;height:243px;border-radius:2.5px;background:#a9a9a9"></div>
      <div class="abs" style="left:7px;top:40px;width:71px;height:18px;border-radius:4px;background:#bcbcbc"></div>
      <div class="t sh" style="top:12.2px">Favorites</div>
      <div class="t si" style="top:26.5px">AudreyM...</div>
      <div class="t si" style="top:45px">Desktop</div>
      <div class="t si" style="top:63.5px">Applicati...</div>
      <div class="t si" style="top:82px">Documents</div>
      <div class="t si" style="top:100.5px">Downloads</div>
      <div class="t si" style="top:119px">Recents</div>
      <div class="t sh" style="top:144.2px">Locations</div>
      <div class="t si" style="top:159px">Audrey's...</div>
      <div class="t si" style="top:177.5px">Macintos...</div>
      <div class="t sh" style="top:202.2px">iCloud</div>
      <div class="t si" style="top:217px">iCloud Dri...</div>
      <div class="t si" style="top:235.5px">Shared</div>
      <div class="t sh" style="top:260.2px">Tags</div>
      <div class="t sh" style="top:281.2px">Media</div>
      <svg class="abs" style="left:0;top:0" width="95" height="296" viewBox="0 0 95 296" fill="none" stroke="#2a6be6" stroke-width="1.25" stroke-linecap="round" stroke-linejoin="round">
        <!-- home -->
        <path d="M12.5 30.5 L17.3 26.3 L22.1 30.5 M13.8 29.9 V34.4 H20.8 V29.9 M20.4 26.7 V28.6"/>
        <rect x="16.3" y="31.6" width="2" height="2.8" fill="#2a6be6" stroke="none"/>
        <!-- desktop -->
        <rect x="12.7" y="44.9" width="9.4" height="7.9" rx="1.6" fill="#2a6be6"/>
        <rect x="13.9" y="47.8" width="7" height="2" rx="0.3" fill="#d5d2cf" stroke="none"/>
        <!-- applications -->
        <path d="M17.3 63.6 L13.9 71.3 M17.3 63.6 L20.7 71.3 M12.7 68.8 H21.9"/>
        <!-- documents -->
        <path d="M14 82.7 a1.1 1.1 0 0 1 1.1 -1.1 H18.2 L20.8 84.2 V89.5 a1.1 1.1 0 0 1 -1.1 1.1 H15.1 a1.1 1.1 0 0 1 -1.1 -1.1 Z M18 81.8 V84.4 H20.6"/>
        <!-- downloads -->
        <circle cx="17.4" cy="104.5" r="4.2"/><path d="M17.4 102.3 V106.4 M15.7 105 L17.4 106.7 L19.1 105"/>
        <!-- recents -->
        <circle cx="17.4" cy="122.9" r="4.2"/><path d="M17.4 120.4 V123.1 H15.4"/>
      </svg>
      <svg class="abs" style="left:0;top:0" width="95" height="296" viewBox="0 0 95 296" fill="none" stroke="#5c5c5c" stroke-width="1.15" stroke-linecap="round" stroke-linejoin="round">
        <!-- laptop -->
        <path d="M13.4 159.8 H21.4 V164.8 H13.4 Z M11.8 166.2 H23"/>
        <!-- disk -->
        <path d="M12.2 182.4 L14 178.4 H20.8 L22.6 182.4 V184.8 a1 1 0 0 1 -1 1 H13.2 a1 1 0 0 1 -1 -1 Z M12.2 182.4 H22.6"/>
      </svg>
      <svg class="abs" style="left:0;top:0" width="95" height="296" viewBox="0 0 95 296" fill="none" stroke="#2aa1c4" stroke-width="1.1" stroke-linecap="round" stroke-linejoin="round">
        <!-- cloud -->
        <path d="M14.6 225.4 a2.4 2.4 0 0 1 0.2 -4.7 a3.4 3.4 0 0 1 6.4 -0.6 a2.7 2.7 0 0 1 -0.2 5.3 Z"/>
        <!-- shared folder -->
        <path d="M12.4 237.6 a1 1 0 0 1 1 -1 H16 L17.2 237.8 H19.2 M12.4 239.6 H19 M12.4 237.6 V244 a1 1 0 0 0 1 1 H21.4 a1 1 0 0 0 1 -1 V241"/><circle cx="21.6" cy="238" r="1.7" fill="#2aa1c4"/>
      </svg>
    </div>

    <!-- toolbar -->
    <div class="abs btn" style="left:108.5px;top:13.3px;width:15.5px;height:14px"></div>
    <div class="abs btn" style="left:125px;top:13.3px;width:15.5px;height:14px"></div>
    <div class="abs btn" style="left:145.5px;top:13.3px;width:30.5px;height:14px"></div>
    <div class="abs btn" style="left:181px;top:13.3px;width:30.5px;height:14px"></div>
    <svg class="abs" style="left:95px;top:0" width="140" height="40" viewBox="0 0 140 40" fill="none" stroke-linecap="round" stroke-linejoin="round">
      <path d="M22.6 16.6 L19.4 20.2 L22.6 23.8" stroke="#2a2a2a" stroke-width="1.2"/>
      <path d="M37.2 16.6 L40.4 20.2 L37.2 23.8" stroke="#b9b9b9" stroke-width="1.2"/>
      <rect x="56.4" y="16.6" width="9.4" height="7.2" rx="1.4" stroke="#3a3a3a" stroke-width="1"/>
      <path d="M59.5 16.8 V23.6 M62.7 16.8 V23.6" stroke="#3a3a3a" stroke-width="1"/>
      <path d="M70.6 19.4 L72.6 21.4 L74.6 19.4" stroke="#2a2a2a" stroke-width="1.3"/>
      <g stroke="#6a6a6a" stroke-width="0.9">
        <rect x="92.6" y="15.8" width="2.2" height="2.2"/><rect x="95.9" y="15.8" width="2.2" height="2.2"/><rect x="99.2" y="15.8" width="2.2" height="2.2"/>
        <rect x="92.6" y="19.1" width="2.2" height="2.2"/><rect x="95.9" y="19.1" width="2.2" height="2.2"/><rect x="99.2" y="19.1" width="2.2" height="2.2"/>
        <rect x="92.6" y="22.4" width="2.2" height="2.2"/><rect x="95.9" y="22.4" width="2.2" height="2.2"/><rect x="99.2" y="22.4" width="2.2" height="2.2"/>
      </g>
      <path d="M106.2 19.4 L108.2 21.4 L110.2 19.4" stroke="#2a2a2a" stroke-width="1.3"/>
    </svg>
    <!-- path popup -->
    <div class="abs btn" style="left:244px;top:13.5px;width:138px;height:14px"></div>
    <svg class="abs" style="left:249px;top:15px" width="12" height="11" viewBox="0 0 12 11"><path d="M1 2.2 a1 1 0 0 1 1 -1 H4.6 L5.8 2.4 H10 a1 1 0 0 1 1 1 V9 a1 1 0 0 1 -1 1 H2 a1 1 0 0 1 -1 -1 Z" fill="#6cb6ec"/><path d="M1 3.6 H11 V9 a1 1 0 0 1 -1 1 H2 a1 1 0 0 1 -1 -1 Z" fill="#8ccbf6"/></svg>
    <div class="t" style="left:263px;top:16.2px;font-size:8.6px;color:#1c1c1c;-webkit-text-stroke:0.2px #1c1c1c">Media</div>
    <div class="abs" style="left:369px;top:15.2px;width:10.8px;height:10.6px;border-radius:3px;background:#3478f6"></div>
    <svg class="abs" style="left:368.9px;top:15px" width="11" height="11" viewBox="0 0 11 11" fill="none" stroke="#fff" stroke-width="1.1" stroke-linecap="round" stroke-linejoin="round"><path d="M3.6 4.3 L5.5 2.5 L7.4 4.3 M3.6 6.7 L5.5 8.5 L7.4 6.7"/></svg>
    <!-- search -->
    <div class="abs btn" style="left:415px;top:13.5px;width:101px;height:14px"></div>
    <svg class="abs" style="left:418px;top:15px" width="12" height="12" viewBox="0 0 12 12" fill="none" stroke="#555" stroke-width="1.1" stroke-linecap="round"><circle cx="5" cy="5.2" r="2.9"/><path d="M7.2 7.4 L9.6 9.8"/></svg>
    <div class="t" style="left:433px;top:16.5px;font-size:8.5px;color:#b4b4b4">Search</div>
    <div class="abs" style="left:95px;top:40.5px;width:435px;height:1px;background:#e6e6e6"></div>

    <!-- column 1 -->
    <div class="abs" style="left:102.5px;top:45.5px;width:112.5px;height:14px;border-radius:3.5px;background:#dcdcdc"></div>
    <svg class="abs" style="left:106px;top:47px" width="12" height="11" viewBox="0 0 12 11"><path d="M1 2.2 a1 1 0 0 1 1 -1 H4.6 L5.8 2.4 H10 a1 1 0 0 1 1 1 V9 a1 1 0 0 1 -1 1 H2 a1 1 0 0 1 -1 -1 Z" fill="#6cb6ec"/><path d="M1 3.6 H11 V9 a1 1 0 0 1 -1 1 H2 a1 1 0 0 1 -1 -1 Z" fill="#8ccbf6"/></svg>
    <div class="t" style="left:120px;top:48.6px;font-size:8.5px;color:#1c1c1c;-webkit-text-stroke:0.2px #1c1c1c">Media</div>
    <svg class="abs" style="left:206px;top:49px" width="6" height="8" viewBox="0 0 6 8" fill="none" stroke="#8a8a8a" stroke-width="0.9" stroke-linecap="round" stroke-linejoin="round"><path d="M2 1.6 L4.4 4 L2 6.4"/></svg>
    <div class="abs" style="left:221.3px;top:41px;width:10.2px;height:215px;background:#f7f7f7;border-left:1px solid #ebebeb;border-right:1px solid #ebebeb"></div>
    <div class="abs" style="left:224.8px;top:249px;width:1px;height:4.4px;background:#a4a4a4"></div>
    <div class="abs" style="left:227.4px;top:249px;width:1px;height:4.4px;background:#a4a4a4"></div>

    <!-- column 2 -->
    <div class="abs" style="left:238px;top:45.6px;width:112.5px;height:28.6px;border-radius:3.5px;background:#2a5fd8"></div>
    <div class="abs" style="left:243px;top:59.8px;width:104px;height:0.5px;background:#3e6fe0"></div>
    <div class="abs" style="left:242.3px;top:48.8px;width:9.6px;height:7.4px;background:#151515;border-radius:0.8px"></div>
    <div class="abs" style="left:242.3px;top:50.6px;width:9.6px;height:2.6px;background:linear-gradient(180deg,#c8ccd0,#6f767a)"></div>
    <div class="abs" style="left:242.6px;top:62.3px;width:9px;height:9px;background:#f1f1f1;border-radius:0.5px"></div>
    <div class="t" style="left:245.2px;top:64.2px;font-size:5.5px;color:#c6c6c6">&#9835;</div>
    <div class="t" style="left:255.5px;top:48.3px;font-size:8.35px;color:#fff;-webkit-text-stroke:0.25px #fff">IMG_5866.MOV</div>
    <div class="t" style="left:255.5px;top:62.8px;font-size:8.35px;color:#fff;-webkit-text-stroke:0.25px #fff">Lyle Kam...matic].mp3</div>
    <div class="abs" style="left:357.3px;top:41px;width:9.9px;height:215px;background:#f7f7f7;border-left:1px solid #ebebeb;border-right:1px solid #ebebeb"></div>
    <div class="abs" style="left:360.4px;top:249px;width:1px;height:4.4px;background:#a4a4a4"></div>
    <div class="abs" style="left:363px;top:249px;width:1px;height:4.4px;background:#a4a4a4"></div>

    <!-- preview column -->
    <div id="preview" class="abs" style="left:366px;top:41px;width:155px;height:215px;overflow:hidden">
      <!-- photo behind (dialog-relative origin 588,157) -->
      <div class="abs" style="left:13px;top:38.5px;width:129px;height:73px;transform:rotate(-5.4deg);overflow:hidden;background:linear-gradient(90deg,#6f9fe0 0,#8fb2e4 10%,#a9b5b0 40%,#5a6a3a 75%,#2a3418 100%)">
        <div class="abs" style="left:0;top:0;width:16px;height:73px;background:linear-gradient(180deg,#4f86d4 0,#6c9ee2 30%,#a9c4ea 45%,#dbe4ee 56%,#e4e9ee 62%,#8a9098 68%,#4a5058 74%,#23272b 84%,#1b1f1c 92%,#3a4422 100%)"></div>
        <div class="abs" style="left:1px;top:1px;width:6px;height:5px;border-radius:50%;background:#b4ae32"></div>
        <div class="abs" style="left:3px;top:9px;width:5px;height:6px;border-radius:50%;background:#a9a52e"></div>
        <div class="abs" style="left:6px;top:22px;width:6px;height:6px;border-radius:50%;background:#9f9d30"></div>
        <div class="abs" style="left:2px;top:4px;width:9px;height:1px;background:#2c2a18;transform:rotate(25deg)"></div>
        <div class="abs" style="left:7px;top:57px;width:4px;height:4px;border-radius:50%;background:#dfe8f4"></div>
        <div class="abs" style="left:115px;top:0;width:14px;height:73px;background:
          radial-gradient(circle at 40% 8%,#7a8026 0,rgba(122,128,38,0) 3.5px),
          radial-gradient(circle at 60% 22%,#6c7424 0,rgba(108,116,36,0) 3px),
          radial-gradient(circle at 45% 36%,#dfe6ee 0,rgba(223,230,238,0) 1.8px),
          radial-gradient(circle at 55% 47%,#e8ecf0 0,rgba(232,236,240,0) 1.6px),
          radial-gradient(circle at 50% 62%,#7e8a2c 0,rgba(126,138,44,0) 3.5px),
          radial-gradient(circle at 35% 70%,#b8c4d8 0,rgba(184,196,216,0) 1.6px),
          radial-gradient(circle at 45% 84%,#77862e 0,rgba(119,134,46,0) 5px),
          radial-gradient(circle at 70% 94%,#6a7a2a 0,rgba(106,122,42,0) 4px),
          linear-gradient(180deg,#2a3216,#141a0c 30%,#1c2410 55%,#3a4a1e 80%,#4c5c26)"></div>
      </div>
      <!-- music doc -->
      <div class="abs" style="left:19.6px;top:17.8px;width:115.8px;height:115.2px;background:#f2f2f2;box-shadow:0 0 0 0.5px rgba(0,0,0,.06),0 0.5px 3px rgba(0,0,0,.16)"></div>
      <svg class="abs" style="left:19.6px;top:17.2px" width="116" height="116" viewBox="0 0 116 116"><g fill="#c9c9c9">
        <ellipse cx="38.2" cy="79.8" rx="9.4" ry="8.2" transform="rotate(-12 38.2 79.8)"/>
        <ellipse cx="68.4" cy="73.6" rx="9.4" ry="8.2" transform="rotate(-12 68.4 73.6)"/>
        <path d="M43.6 36.2 a2.6 2.6 0 0 1 2.2 -2.6 L75 28.2 a2.4 2.4 0 0 1 2.9 2.4 V73.6 H72.6 V43.2 L48.6 47.8 V79.8 H43.6 Z"/>
      </g></svg>
      <div class="t" style="left:8px;top:121.5px"></div>
      <div class="t" style="left:8px;top:162.9px;font-size:10px;font-weight:bold;color:#1d1d1d">2 items</div>
      <div class="t" style="left:8px;top:177.1px;font-size:9px;color:#8a8a8a">2 documents - 31.8 MB</div>
      <div class="t" style="left:8px;top:192.9px;font-size:8.6px;font-weight:bold;color:#1d1d1d">Information</div>
      <div class="t" style="left:8px;top:208px;font-size:7.7px;color:#8a8a8a">Created</div>
      <div class="t" style="left:51px;top:208px;font-size:7.6px;font-weight:bold;color:#222">Apr 6, 2024 – May 12, 2025</div>
    </div>
    <div class="abs" style="left:520.5px;top:41px;width:9.5px;height:215px;background:#f8f8f8;border-left:1px solid #ececec"></div>
    <div class="abs" style="left:523px;top:43.5px;width:4.5px;height:163px;border-radius:2.5px;background:#bdbdbd"></div>
    <div class="abs" style="left:523.7px;top:248px;width:1px;height:5px;background:#b5b5b5"></div>
    <div class="abs" style="left:525.7px;top:248px;width:1px;height:5px;background:#b5b5b5"></div>

    <!-- bottom -->
    <div class="abs" style="left:95px;top:256px;width:435px;height:1px;background:#e4e4e4"></div>
    <div class="abs btn" style="left:108.5px;top:270px;width:59px;height:13px"></div>
    <div class="t" style="left:115.4px;top:272px;font-size:8.8px;color:#1e1e1e;-webkit-text-stroke:0.18px #1e1e1e">New Folder</div>
    <div class="abs btn" style="left:416px;top:270px;width:47.5px;height:13px"></div>
    <div class="t" style="left:425.8px;top:272px;font-size:8.8px;color:#1e1e1e;-webkit-text-stroke:0.18px #1e1e1e">Cancel</div>
    <div class="abs" style="left:469px;top:270px;width:47.5px;height:13px;border-radius:3.5px;background:linear-gradient(#4a8cf7,#2f6fe9)"></div>
    <div class="t" style="left:481.8px;top:272px;font-size:8.8px;color:#fff;-webkit-text-stroke:0.22px #fff">Open</div>
  </div>
</div>
</body>
</html>
